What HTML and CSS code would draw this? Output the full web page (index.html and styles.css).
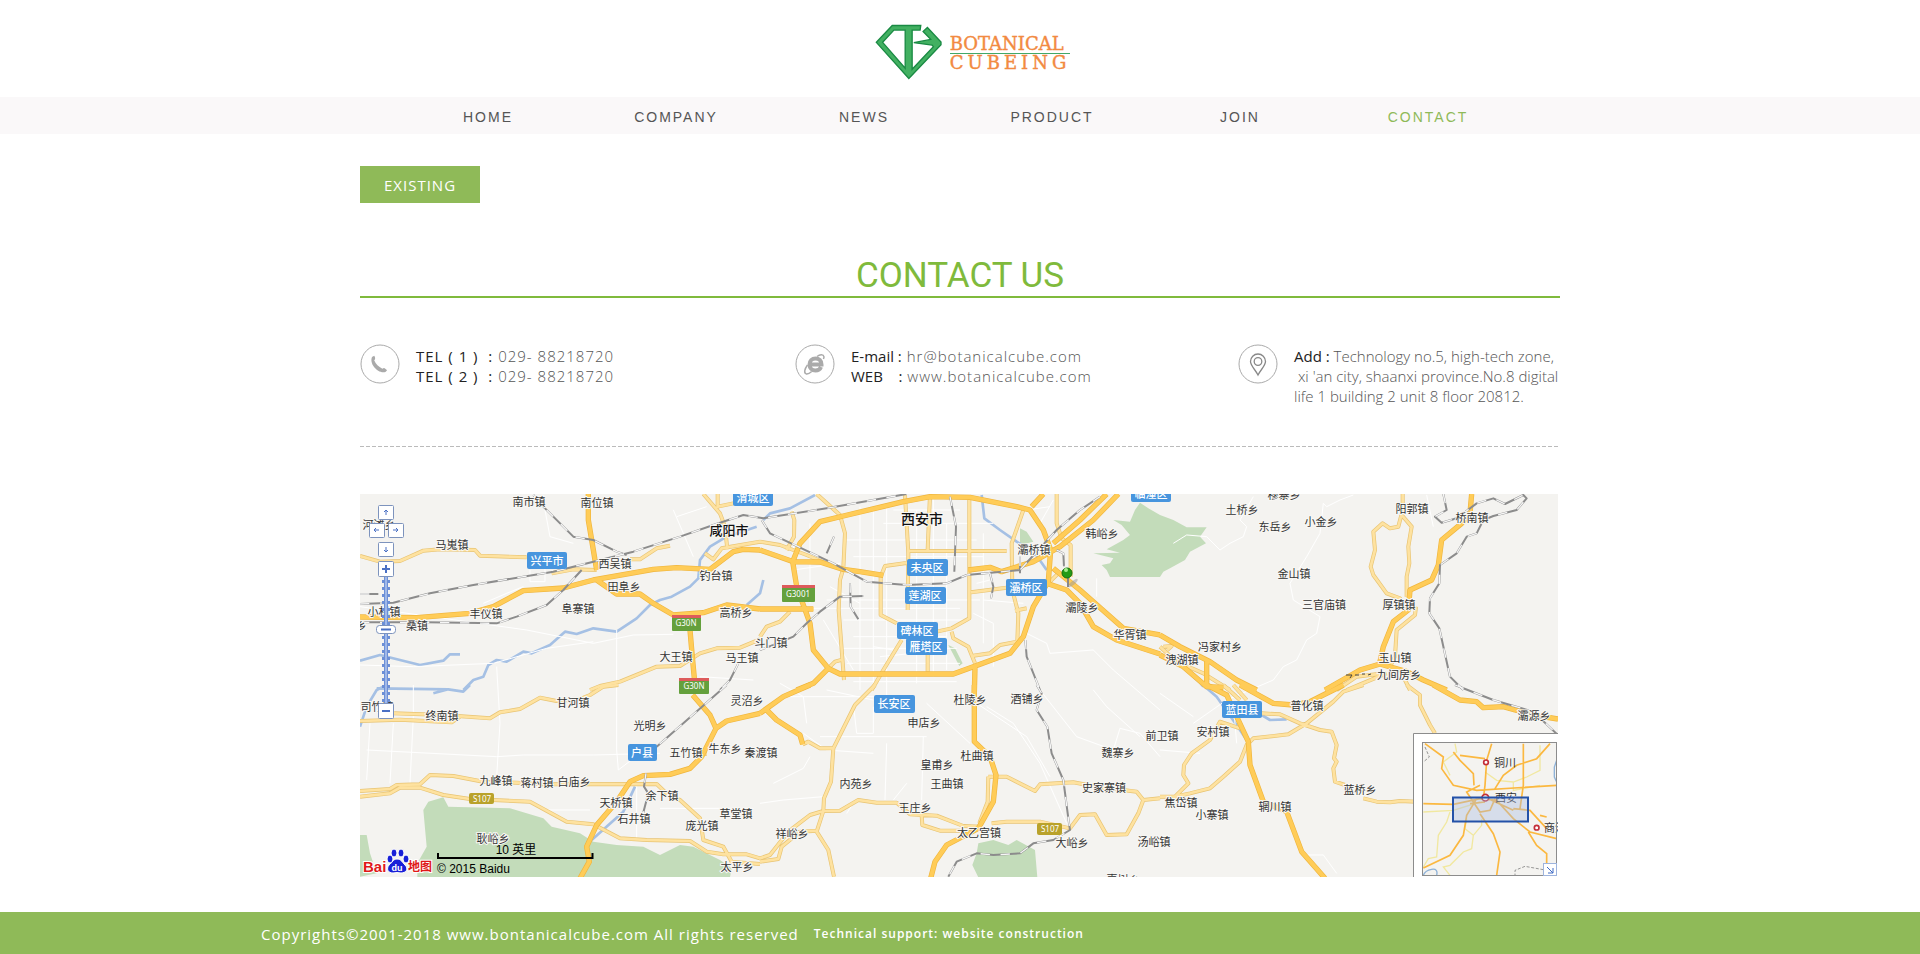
FILE: index.html
```
<!DOCTYPE html>
<html lang="en">
<head>
<meta charset="utf-8">
<title>Botanical Cubeing - Contact</title>
<link rel="stylesheet" href="styles.css">
</head>
<body>
<header class="header">
  <a class="logo" href="#" aria-label="Botanical Cubeing">
    <svg class="logo-mark" viewBox="46 42 202 168" aria-hidden="true">
      <path d="M98 46H184L182 60H158V178L222 110L218 105L163 98L214 88L191 64L204 52L245 96V104L148 206L50 97ZM103 60L69 97L137 175V60Z"/>
    </svg>
    <span class="logo-text"><span class="logo-top">BOTANICAL</span><span class="logo-bottom">CUBEING</span></span>
  </a>
</header>
<nav class="nav">
  <div class="nav-inner">
    <a href="#">HOME</a>
    <a href="#">COMPANY</a>
    <a href="#">NEWS</a>
    <a href="#">PRODUCT</a>
    <a href="#">JOIN</a>
    <a href="#" class="active" aria-current="page">CONTACT</a>
  </div>
</nav>
<main class="main">
  <a class="tag" href="#">EXISTING</a>
  <h1 class="title">CONTACT US</h1>
  <section class="contacts">
    <div class="contact phone">
      <svg class="icon" viewBox="0 0 40 40" aria-hidden="true"><circle cx="20" cy="20" r="19"/><path class="solid" d="M12 13l2.200-1.200c1 1.600 1.200 2.500.7 3.600l-.7.900c1.600 3.800 4.300 6.600 8.200 8.400l1.400-.6c1.300.4 2.300 1.100 3.200 2.500l-1.600 1.400C18 30 9 20 12 13z"/></svg>
      <p><b>TEL ( 1 )&nbsp; :</b> 029- 88218720<br><b>TEL ( 2 )&nbsp; :</b> 029- 88218720</p>
    </div>
    <div class="contact web">
      <svg class="icon" viewBox="0 0 40 40" aria-hidden="true"><circle cx="20" cy="20" r="19"/><path class="ring" d="M14.500 20.500h12c0-4-2.500-6-6-6s-6 2.500-6 6 2.500 6 6 6c2.500 0 4.500-1 5.500-3.500"/><path class="orbit" d="M22 12.500c3-2.300 6.500-2.200 7 .3 0 1-.3 1.600-.6 2.200M12.500 21c-3 4-3.800 8.200-1.300 8.900 1.600.3 3.700-.8 5.500-2.400"/></svg>
      <p><b class="tight">E-mail :</b> hr@botanicalcube.com<br><b class="tight">WEB &nbsp;&nbsp; :</b> www.botanicalcube.com</p>
    </div>
    <div class="contact address">
      <svg class="icon" viewBox="0 0 40 40" aria-hidden="true"><circle cx="20" cy="20" r="19"/><path class="line" d="M20 31c-2.500-5-7.500-9.500-7.500-13.500a7.500 7.500 0 0 1 15 0C27.500 21.500 22.500 26 20 31z"/><circle class="line" cx="20" cy="17.500" r="3.800"/></svg>
      <p><b>Add :</b> Technology no.5, high-tech zone,<br>&nbsp;xi 'an city, shaanxi province.No.8 digital<br>life 1 building 2 unit 8 floor 20812.</p>
    </div>
  </section>
  <svg class="map" viewBox="0 0 1198 383" role="img" aria-label="Map of Xi'an">
    <defs>
      <g id="minor">
        <g>
          <path d="M0 198L60 215L120 213L190 182L240 178L345 180L360 197L500 202M575 250L640 238L710 240M810 208L840 208L890 175L930 167M1030 12L1080 70L1095 110L1102 178M1073 12V50L1120 40M1035 190L1060 208L1085 175L1200 155"/>
          <path d="M690 600L720 588L780 575L890 530L960 528L1020 490L1070 475L1140 473L1200 448"/>
        </g>
        <g transform="translate(1200 0)">
          <path d="M0 155L60 165L140 195L210 225M170 12L240 75L255 130L250 235L240 270L236 360L252 570M95 65L103 90L102 140L80 180M435 15L445 190L443 360M510 15L503 180M445 183H740M628 15V385L575 415L530 425M445 218L375 228L362 260V375L410 400M633 307L740 293M790 60L755 160L757 300L775 370L772 455L720 465L690 490L640 497M575 425L580 445L625 470L645 520M503 480V545M425 450L370 540L335 600M890 12V100L905 145L932 165V260M800 355L765 362M0 440L20 410L60 395L90 365M250 508L225 515L200 540M880 235L895 250L870 275"/>
        </g>
        <g transform="translate(2400 0)">
          <path d="M728 12V60L715 110L690 115L668 100L640 125L645 180L632 230L640 255L680 310L720 325L735 360M725 75L755 110L745 170L748 220L740 260V320M768 350L765 375L710 420L705 500L690 530M0 470L50 515L130 550L210 600M530 600L590 560L670 550M560 600L620 575L680 550M735 570L750 600M10 470L35 468L22 480"/>
        </g>
        <g transform="translate(0 585)">
          <path d="M0 108L120 104L275 112L300 95M100 85L250 90L390 100L420 82L480 72L540 38L590 48L660 42L690 30L730 5L775 0"/>
          <path d="M0 318L90 312L110 300L180 298L210 270L280 273L370 290L470 293L540 298L890 297L930 335L960 345L1020 400L1030 465L1090 485L1115 530M0 335L90 325L120 308L180 308L250 330L330 342L510 350L620 410L700 418L780 460L860 465L990 468L1040 500L1090 508L1160 508L1200 520M1025 207H1040M1110 530L1200 537"/>
        </g>
        <g transform="translate(1200 585)">
          <path d="M345 0L285 60L220 190L213 290L192 340L190 378L170 440L205 495L222 575M128 178L145 170L180 190H220M0 520L30 510L85 440L150 390L190 378L240 377L295 345L350 353L410 353L450 388L530 392L610 423L660 425M0 530L55 522L65 485L120 440L170 437M485 390L487 420L540 437L600 437M685 275L740 275L825 318L840 298L940 292L1010 305L1130 320L1150 345L1200 340M685 275L683 350L658 415M695 415L740 410L840 410L930 430L960 390L1005 388L1040 450L1100 448L1135 385L1150 345"/>
        </g>
        <g transform="translate(2400 585)">
          <path d="M0 335L45 335L85 295L70 270L72 240L95 205L150 165L180 110L240 130M45 335L90 325L150 310L190 275L240 230L260 180L280 160L385 148L440 115L520 50L550 20L610 0M305 85L360 88L420 115L480 135L515 140L530 180L522 220L530 230L520 250L525 290L555 300M610 340L650 350L690 352L720 348L770 350M740 0L780 30L780 60L810 120L825 145M190 0L240 45M220 0L260 45"/>
        </g>
      </g>
      <g id="major">
        <g>
          <path d="M0 381L170 383L330 370L400 350L490 302L610 294L700 270L880 238L950 233L1050 238L1120 185L1150 178L1200 180M685 12V90L710 240M710 270L770 312L840 312L880 340L940 375L1030 368L1100 345L1200 357M990 420L996 490L1003 565"/>
        </g>
        <g transform="translate(1200 0)">
          <path d="M0 180L100 215L180 216L250 238L300 245L370 256M0 357H160M250 78L180 95L120 160L98 215L110 290L150 400L160 480L205 535L240 552H580L640 530L750 490L790 440L820 350L865 275L872 180L850 120L810 60L770 50L630 22L510 20L430 35ZM625 240L690 232L725 245L820 215L900 170L1000 90L1075 12M1040 12L960 90L880 160M860 280L920 300L960 340L1000 410L1070 450L1200 492M880 235L960 300L1090 415L1200 435M205 535L160 580L110 600M645 530L643 610M815 50L850 12"/>
        </g>
        <g transform="translate(2400 0)">
          <path d="M935 12L930 70L905 100L845 150L835 225L815 270L750 300L745 360L700 395L670 470L660 515M0 435L60 470L150 515L230 570L290 600M0 495L70 530L140 590L190 592M140 515V590M495 600L600 540L660 522L740 545L790 570L860 600"/>
        </g>
        <g transform="translate(0 585)">
          <path d="M998 30L1050 90L1068 130L1025 215L990 250L930 268L850 272L810 290L770 350L710 420L680 485L688 530L660 580M1200 85L1100 108L1068 130"/>
        </g>
        <g transform="translate(1200 585)">
          <path d="M0 85L70 35L150 0M20 75L50 105L120 150L128 178M643 0V170L690 215L708 270L700 350L655 430L560 480L525 530L512 580"/>
        </g>
        <g transform="translate(2400 585)">
          <path d="M140 0L200 30L265 170L270 240L310 350L380 380L425 500L495 580M240 0L340 55L400 60L450 50L550 0M820 0L900 45L950 50L970 68L1030 65L1120 90L1194 102"/>
        </g>
      </g>
      <g id="rails">
        <path d="M0 342L100 338L210 310L340 285L580 245L700 215L820 185L960 140L1060 105L1150 75L1210 85L1400 55L1640 12M0 312H55M0 397H200L410 400L470 380L560 345L610 300L665 240M520 15L555 55L640 140L700 150L770 185L800 195M1200 480L1240 465L1300 440L1340 400L1380 365L1440 320L1510 318M1135 520L1110 570L1080 600"/>
        <path d="M1205 90L1230 130L1420 220L1520 275L1640 285L1760 280L1820 255L1980 240L2090 120L2160 60L2220 20M1770 20L1788 110L1783 245M1422 140L1400 190M1470 280L1472 350L1495 388M1890 250L1900 290L1893 325M2090 180L2110 190L2112 230M1980 200L1980 250M1996 450L2000 500L2040 600"/>
        <path d="M3250 12L3260 60L3225 80L3245 98L3290 85L3350 40L3400 25L3435 42L3490 15L3500 25L3470 60L3400 78L3370 90L3350 130L3320 140L3290 190L3240 225L3238 280L3210 325L3208 370L3238 415L3270 560L3310 600"/>
        <path d="M1100 585L890 770M858 850L852 890L865 910L848 975M2030 585L2045 610L2030 660L2062 710L2075 790L2110 870L2125 985L2130 1020L2080 1050L2020 1060L1980 1090L1900 1095L1850 1090L1790 1115L1765 1160M3285 585L3400 630L3520 665L3594 735"/>
      </g>
    </defs>
    <rect class="land" width="1198" height="383"/>
    <g transform="translate(0 -4) scale(.33333)">
      <g class="park">
        <path d="M2340 38L2365 55L2400 75L2440 90L2480 112L2540 112L2520 140L2538 160L2490 185L2475 210L2430 235L2410 245L2400 261H2250L2240 240L2225 225L2250 220L2260 205L2200 190L2280 188L2240 178L2290 150L2310 135L2285 105L2260 90L2310 95L2325 60Z"/>
        <path d="M190 960L205 935L250 922L265 950L450 955L550 985L575 1010L660 1030L700 1055L770 1065L850 1070L900 1095L960 1065L1000 1070L1080 1110L1115 1135L1110 1162H172V1120L200 1070ZM0 1035H20L30 1090L50 1150L0 1160Z"/>
        <path d="M1855 1060L1900 1050L1945 1065L1970 1050L2025 1080L2032 1162H1855L1837 1125L1850 1090ZM1980 115L2000 125L2020 155L1980 165ZM1765 465L1785 475L1808 520L1798 528Z"/>
      </g>
      <g class="river">
        <path d="M0 512L60 495L120 510L180 525L250 512L270 493H300M310 600L340 570L370 560L385 525L410 510L440 515L490 485L515 490L570 465L615 425L650 432L700 415L770 425L830 385L870 345L900 330L935 320L990 290L1015 265L1020 210L1050 170L1100 140L1190 110M1160 345L1200 310L1210 270M1210 90L1230 70L1290 55L1365 15"/>
        <path d="M1865 15L1873 85L1920 120L1970 155L2025 190L2060 240M0 710L20 650L50 600L80 585M50 595L265 598L310 605L330 585M265 598L220 610M825 890L790 965L695 1050M2500 560L2570 620L2640 720L2660 750M2700 672L2730 690L2780 688M2510 565L2530 590"/>
      </g>
      <g class="street">
        <path d="M550 15L555 60L570 140L640 160M770 420V780L775 840L860 775M0 350L500 420L700 460L820 435L940 433M0 525L160 530L400 520L560 475L700 455M20 780L410 800L490 795L700 795L900 790M160 585V680L150 880M100 700L90 880M30 700L20 870M410 530L420 700L410 860M940 60L1000 200M950 80L1040 50M830 880V1050M560 960H690M900 955L1180 955M1020 560L1180 570M510 240V275H555V200M370 340L440 310L490 290"/>
        <path d="M1200 355H1800M1480 200H1870M1450 150H1850M1400 330L1860 330M1450 390H1830M1480 440H1760M1440 475H1790M1460 520H1800M1480 575H1790M1500 50V600M1540 60V600M1580 40V640M1670 60V580M1720 20V560M1760 100V540M1870 130V460M1600 60H1800M1570 100H1900M1410 290L1500 340M1390 390L1480 540M1350 100V340M1300 60V300M1300 240L1440 220M1840 370L1900 400V530M1290 620H1550M1260 580L1330 620L1340 700M1480 640L1490 730H1540V650M1400 600L1540 630M1700 640L1830 760M1880 650L1960 700L2040 820L2120 1000M1850 640L2000 740L2070 860M1380 740H1700M1690 740L1685 930M1580 760L1575 930M1540 790L1400 780L1330 730M1240 880L1330 835L1350 800M1200 940L1270 930L1390 920M1600 930L1640 880M2040 600L2150 740L2260 780L2280 715L2340 730L2400 800M2000 430L2060 460L2070 490L2200 480L2260 540L2400 660M2210 265V320M1540 470L1600 480M1560 500L1660 490M1870 330L1990 340M1850 280L1890 270M2040 100L2080 30M2000 60L2070 50"/>
        <path d="M2440 160L2480 135L2540 140L2580 180L2610 160L2650 140L2660 110L2640 90L2680 20M2980 15L2940 30L2900 50L2890 40L2880 130L2840 200L2790 280L2800 330L2880 380L2870 430L2840 450L2810 510L2770 530L2740 570L2600 630L2500 700M2400 610L2500 680M2400 780L2520 790M2840 1095L2890 1095L2930 1150M3200 15L3220 110M2620 640L2630 760M2200 600L2240 650L2340 740M1480 940L1460 970"/>
      </g>
      <use href="#minor" class="minor-edge"/>
      <use href="#minor" class="minor-core"/>
      <use href="#major" class="major-edge"/>
      <use href="#major" class="major-core"/>
      <use href="#rails" class="rail-base"/>
      <use href="#rails" class="rail-dash"/>
    </g>
    <g class="town">
      <text x="169" y="12">南市镇</text><text x="237" y="13">南位镇</text><text x="19" y="35">河滩乡</text><text x="92" y="55">马嵬镇</text><text x="255" y="74">西吴镇</text><text x="356" y="86">钓台镇</text><text x="264" y="97">田阜乡</text><text x="218" y="119">阜寨镇</text><text x="24" y="122">小村镇</text><text x="126" y="124">丰仪镇</text><text x="57" y="136">桑镇</text><text x="1" y="136">乡</text><text x="376" y="123">高桥乡</text><text x="316" y="167">大王镇</text><text x="382" y="168">马王镇</text><text x="411" y="153">斗门镇</text>
      <text x="674" y="60">灞桥镇</text><text x="742" y="44">韩峪乡</text><text x="722" y="118">灞陵乡</text><text x="770" y="145">华胥镇</text>
      <text x="924" y="5">穆寨乡</text><text x="882" y="20">土桥乡</text><text x="915" y="37">东岳乡</text><text x="961" y="32">小金乡</text><text x="1052" y="19">阳郭镇</text><text x="1112" y="28">桥南镇</text><text x="934" y="84">金山镇</text><text x="964" y="115">三官庙镇</text><text x="1039" y="115">厚镇镇</text><text x="860" y="157">冯家村乡</text><text x="822" y="170">洩湖镇</text><text x="1035" y="168">玉山镇</text><text x="1039" y="185">九间房乡</text>
      <text x="17" y="217">司竹镇</text><text x="82" y="226">终南镇</text><text x="213" y="213">甘河镇</text><text x="290" y="236">光明乡</text><text x="387" y="211">灵沼乡</text><text x="326" y="263">五竹镇</text><text x="365" y="259">牛东乡</text><text x="401" y="263">秦渡镇</text><text x="136" y="291">九峰镇</text><text x="177" y="293">蒋村镇</text><text x="214" y="292">白庙乡</text><text x="256" y="313">天桥镇</text><text x="302" y="306">余下镇</text><text x="274" y="329">石井镇</text><text x="376" y="324">草堂镇</text><text x="342" y="336">庞光镇</text><text x="133" y="349">耿峪乡</text><text x="377" y="377">太平乡</text>
      <text x="610" y="210">杜陵乡</text><text x="667" y="209">酒铺乡</text><text x="564" y="233">申店乡</text><text x="758" y="263">魏寨乡</text><text x="802" y="246">前卫镇</text><text x="617" y="266">杜曲镇</text><text x="577" y="275">皇甫乡</text><text x="587" y="294">王曲镇</text><text x="496" y="294">内苑乡</text><text x="744" y="298">史家寨镇</text><text x="555" y="318">王庄乡</text><text x="432" y="344">祥峪乡</text><text x="619" y="343">太乙宫镇</text><text x="712" y="353">大峪乡</text><text x="794" y="352">汤峪镇</text><text x="763" y="390">嘉树乡</text>
      <text x="947" y="216">普化镇</text><text x="1174" y="226">灞源乡</text><text x="853" y="242">安村镇</text><text x="821" y="313">焦岱镇</text><text x="852" y="325">小寨镇</text><text x="1000" y="300">蓝桥乡</text><text x="915" y="317">辋川镇</text>
      <text class="city" x="369" y="41">咸阳市</text><text class="capital" x="562" y="30">西安市</text>
    </g>
    <path class="hidden-name" d="M986 181h6l-2 3M995 181h4m3-1h3m3 1l3-1"/>
    <g class="district">
      <rect x="167" y="58" width="40" height="17" rx="2"/><text x="187" y="71">兴平市</text>
      <rect x="373" y="-5" width="40" height="17" rx="2"/><text x="393" y="8">渭城区</text>
      <rect x="771" y="-9" width="40" height="17" rx="2"/><text x="791" y="4">临潼区</text>
      <rect x="547" y="65" width="41" height="17" rx="2"/><text x="567" y="78">未央区</text>
      <rect x="545" y="93" width="41" height="17" rx="2"/><text x="565" y="106">莲湖区</text>
      <rect x="646" y="85" width="41" height="17" rx="2"/><text x="666" y="98">灞桥区</text>
      <rect x="537" y="128" width="41" height="17" rx="2"/><text x="557" y="141">碑林区</text>
      <rect x="546" y="144" width="41" height="17" rx="2"/><text x="566" y="157">雁塔区</text>
      <rect x="514" y="201" width="41" height="18" rx="2"/><text x="534" y="214">长安区</text>
      <rect x="268" y="250" width="29" height="17" rx="2"/><text x="282" y="263">户县</text>
      <rect x="862" y="207" width="40" height="17" rx="2"/><text x="882" y="220">蓝田县</text>
    </g>
    <g class="shield">
      <rect x="312" y="121" width="29" height="16" rx="1"/><path d="M312 121h29v3h-29z"/><text x="326" y="132">G30N</text>
      <rect x="319" y="184" width="30" height="16" rx="1"/><path d="M319 184h30v3h-30z"/><text x="334" y="195">G30N</text>
      <rect x="422" y="91" width="33" height="17" rx="1"/><path d="M422 91h33v3h-33z"/><text x="438" y="103">G3001</text>
      <g class="provincial"><rect x="109" y="299" width="25" height="11" rx="2"/><text x="122" y="308">S107</text><rect x="677" y="329" width="25" height="12" rx="2"/><text x="690" y="338">S107</text></g>
    </g>
    <g class="pin">
      <ellipse cx="713" cy="89" rx="6" ry="2" transform="rotate(-40 713 89)"/>
      <path d="M708 80v13"/><circle cx="707" cy="79" r="5"/><circle class="shine" cx="706" cy="76" r="2"/>
    </g>
    <g class="control">
      <path class="rail" d="M26 83v126"/><path class="ticks" d="M26 86v122"/><path class="rail-core" d="M26 83v126"/>
      <rect x="18.500" y="11.500" width="15" height="14" rx="1"/><rect x="9.500" y="29.500" width="15" height="14" rx="1"/><rect x="28.500" y="29.500" width="15" height="14" rx="1"/><rect x="18.500" y="48.500" width="15" height="14" rx="1"/>
      <rect x="18.500" y="67.500" width="15" height="15" rx="1"/><rect x="16.500" y="131.500" width="19" height="8" rx="3"/><rect x="18.500" y="209.500" width="15" height="15" rx="1"/>
      <path d="M26 21v-5m-2 2l2-2l2 2M19 36h-5m2-2l-2 2l2 2M33 36h5m-2-2l2 2l-2 2M26 53v5m-2-2l2 2l2-2"/>
      <path class="strong" d="M22 75h8M26 71v8M21 135.500h10M22 217h8"/>
    </g>
    <g class="scale">
      <path d="M78 359v5h154.500v-5"/>
      <text x="156" y="360" class="distance">10 英里</text><text x="77" y="379">© 2015 Baidu</text>
    </g>
    <g class="baidu">
      <text x="3" y="378" class="bai">Bai</text>
      <text x="48" y="377" class="ditu">地图</text>
      <g class="paw"><path d="M37 365c4 0 5 3 8 6c4 4 1 8-4 8q-4-1-8 0c-5 0-7-4-4-8c3-2 4-6 8-6z"/><ellipse cx="30" cy="365" rx="3" ry="4"/><ellipse cx="34" cy="359" rx="3" ry="4"/><ellipse cx="41" cy="359" rx="3" ry="4"/><ellipse cx="46" cy="365" rx="3" ry="4"/></g>
      <text x="37" y="377" class="du">du</text>
    </g>
    <g class="inset">
      <path class="panel" d="M1198 239.500H1053.500V383H1198z"/><path class="line" d="M1198 239.500H1053.500V383"/>
      <svg x="1062" y="248" width="135" height="134" viewBox="786 170 405 402">
        <rect class="land" x="786" y="170" width="405" height="402"/>
        <path class="pale" d="M885 175L890 200L850 230L870 270M975 260L1010 285L1060 290L1100 275L1140 255V180M1060 290V315L1140 300M870 380L860 410L835 450L830 515L805 520L790 545M920 400L915 430L940 450L935 490L910 500L870 540L850 545L870 570M965 400V420L940 450M790 380L880 375L960 350"/>
        <path class="orange" d="M795 175L850 215L845 250L880 300L950 315L1190 300M880 200L900 225L940 265L942 300M900 210L975 220M995 175L980 225L975 300L970 340M1090 175V300L1080 370M1170 175L1130 220L1070 240L1030 270L1005 310M790 355L880 357L960 340L1010 345L1060 400L1110 440L1190 460M960 300L920 320L940 350L960 380L990 375L1005 340M930 355L975 350M950 340L920 390L910 450L870 510L790 548M960 385L1000 445L1020 500L1010 570M1060 370L1110 375L1160 430M1105 440L1130 480L1160 505V540M1140 390L1160 395M985 340L1060 375"/>
        <path class="blue" d="M790 570Q795 555 815 552T830 570M1190 225L1183 245V275L1190 290"/>
        <path class="border" d="M795 185L808 215L790 230M1150 553L1095 543L1065 555V572"/>
        <g class="spots"><circle cx="978" cy="231" r="7"/><circle cx="976" cy="337" r="10"/><circle cx="1130" cy="427" r="7"/></g>
      </svg>
      <g class="names"><text x="1134" y="273">铜川</text><text x="1135" y="308">西安</text><text x="1184" y="338">商洛</text></g>
      <rect class="view" x="1093" y="303.500" width="75" height="24"/>
      <rect class="frame" x="1062.500" y="248.500" width="134" height="133"/>
      <rect class="toggle" x="1183.500" y="369.500" width="13" height="12"/><path class="arrow" d="M1187 373l6 6m0-5v5h-5"/>
    </g>
  </svg>
</main>
<footer class="footer"><span class="copyright">Copyrights©2001-2018 www.bontanicalcube.com All rights reserved</span><span class="support">Technical support: website construction</span></footer>
</body>
</html>
```
FILE: styles.css
```
* { box-sizing: border-box; }
body {
  margin: 0;
  min-height: 100vh;
  display: flex;
  flex-direction: column;
  background: #fff;
  color: #555;
  font-family: "Open Sans", "Noto Sans", "Noto Sans CJK SC", sans-serif;
}
a { color: inherit; text-decoration: none; }
.header { height: 97px; display: flex; justify-content: center; padding: 24px 0 0 25px; }
.logo { display: flex; align-items: flex-start; gap: 8px; }
.logo-mark { width: 67px; height: 56px; }
.logo-mark path { fill: #42b061; stroke: #198a43; stroke-width: 4; }
.logo-text { display: flex; flex-direction: column; padding-top: 11px; color: #f28a41; font: 18px/18px "DejaVu Serif", serif; -webkit-text-stroke: 0.4px #f28a41; }
.logo-top { border-bottom: 1px solid #42a868; padding-right: 4px; }
.logo-bottom { letter-spacing: 4px; }
.nav { background: #faf8f9; }
.nav-inner {
  max-width: 1200px; height: 37px; margin: 0 auto; padding: 2px 38px 0 34px;
  display: flex; align-items: center;
  color: #555; font: 14px/20px "Liberation Sans", sans-serif; letter-spacing: 2px;
}
.nav-inner a { flex: 1; text-align: center; }
.nav-inner .active { color: #8fba58; }
.main { width: 100%; max-width: 1200px; margin: 0 auto; padding-top: 32px; display: flex; flex-direction: column; align-items: flex-start; }
.tag { min-width: 120px; padding: 1px 0 0 24px; background: #8fba58; color: #fff; font-size: 15px; line-height: 36px; letter-spacing: 1px; }
.title {
  align-self: stretch; margin: 53px 0 0; border-bottom: 2px solid #7fba3c;
  color: #7fba3c; font: 400 35px/40px Roboto, "Liberation Sans", sans-serif; text-align: center;
}
.contacts {
  align-self: stretch; display: flex; justify-content: space-between; height: 149px; padding-top: 46px;
  background: repeating-linear-gradient(90deg, #bbb 0 4px, transparent 4px 6px) bottom / 100% 1px no-repeat;
}
.contact { display: flex; align-items: flex-start; gap: 16px; white-space: nowrap; }
.contact p { margin: 2px 0 0; font-size: 15px; line-height: 20px; font-weight: 300; letter-spacing: 1px; }
.contact b { color: #222; font-weight: 400; }
.contact .tight { letter-spacing: 0; }
.phone { flex: 0 0 435px; }
.web { flex: 0 0 443px; }
.address { flex: 0 0 322px; }
.address p { letter-spacing: 0; }
.icon { width: 40px; height: 40px; flex: none; fill: none; stroke: #aaa; stroke-width: 1; }
.icon .solid { fill: #aaa; stroke: none; }
.icon .ring { stroke-width: 4; }
.icon .orbit { stroke-width: 1.5; }
.icon .line { stroke: #888; stroke-width: 1.3; }

.map { display: block; width: 100%; margin: 47px 0 35px; padding-right: 2px; font-family: "Noto Sans CJK SC", sans-serif; }
.land { fill: #f4f3f0; }
.park { fill: #c3dcba; }
.map use, .river, .street { fill: none; stroke-linejoin: round; }
.river { stroke: #a5c0e4; stroke-width: 8; }
.street { stroke: #fff; stroke-width: 3; }
.minor-edge { stroke: #e8c473; stroke-width: 12; }
.minor-core { stroke: #fee2a0; stroke-width: 8; }
.major-edge { stroke: #f0b63e; stroke-width: 16; }
.major-core { stroke: #ffcc58; stroke-width: 12; }
.rail-base { stroke: #8c8c8c; stroke-width: 6; }
.rail-dash { stroke: #f6f6f6; stroke-width: 4; stroke-dasharray: 28 32; }
.map text { stroke: none; }
.town { font-size: 11px; text-anchor: middle; fill: #333; }
.town text { stroke: #f8f7f4; stroke-width: 2px; paint-order: stroke; }
.town .city { font-size: 13px; fill: #111; font-weight: 500; }
.town .capital { font-size: 14px; fill: #111; font-weight: 500; }
.hidden-name { fill: none; stroke: #444; }
.district { font-size: 11px; text-anchor: middle; }
.district rect { fill: #4795de; }
.district text { fill: #fff; font-weight: 500; }
.shield { font: 8px "Noto Sans", sans-serif; text-anchor: middle; }
.shield rect { fill: #64a03c; }
.shield path { fill: #dd5b5b; }
.shield text { fill: #fff; }
.shield .provincial rect { fill: #b9a22b; }
.pin ellipse { fill: #999; opacity: .5; }
.pin path { stroke: #888; stroke-width: 2; }
.pin circle { fill: #249b16; stroke: #11700c; stroke-width: 1; }
.pin .shine { fill: #a5eb8c; stroke: none; }
.control { fill: none; stroke: #4a70c4; }
.control rect { fill: #fff; stroke: #7d93bd; }
.control .rail { stroke: #6c8fd6; stroke-width: 4; }
.control .ticks { stroke: #6c8fd6; stroke-width: 8; stroke-dasharray: 3 4; }
.control .rail-core { stroke: #d5e2fa; stroke-width: 1; }
.control .strong { stroke-width: 2; }
.scale { font: 12px "Liberation Sans", "Noto Sans CJK SC", sans-serif; fill: #000; }
.scale path { fill: none; stroke: #000; stroke-width: 2; }
.scale .distance { text-anchor: middle; }
.baidu text { stroke: #fff; stroke-width: 2px; paint-order: stroke; }
.baidu .bai { fill: #e01818; font: bold 15px "Liberation Sans", sans-serif; }
.baidu .ditu { fill: #e01818; font: bold 12px "Noto Sans CJK SC", sans-serif; }
.baidu .paw { fill: #1820d8; stroke: #fff; stroke-width: 1; }
.baidu .du { fill: #fff; stroke: none; font: bold 9px "Liberation Sans", sans-serif; text-anchor: middle; }
.inset .panel { fill: #fff; }
.inset .line, .inset .frame { fill: none; stroke: #8c8c8c; }
.inset .pale, .inset .orange, .inset .blue, .inset .border { fill: none; stroke-width: 4; }
.inset .pale { stroke: #f1e8a0; }
.inset .orange { stroke: #fbb840; stroke-width: 5; }
.inset .blue { stroke: #8eb2d8; }
.inset .border { stroke: #666; stroke-width: 2; stroke-dasharray: 9 5; }
.inset .spots { fill: #fff; stroke: #c42e38; stroke-width: 5; }
.inset .names { font-size: 11px; fill: #333; }
.inset .view { fill: #a9bce2; fill-opacity: .4; stroke: #2452a8; stroke-width: 2; }
.inset .toggle { fill: #fff; stroke: #9eb4dd; }
.inset .arrow { fill: none; stroke: #3e6bc5; }

.footer {
  flex: 1 0 42px; display: flex; align-items: center; gap: 15px; padding: 2px 0 0 261px;
  background: #8fba58; color: #fff; white-space: nowrap; letter-spacing: 1px;
}
.copyright { font-size: 15px; line-height: 20px; }
.support { font-size: 12px; line-height: 20px; font-weight: 600; }
```
